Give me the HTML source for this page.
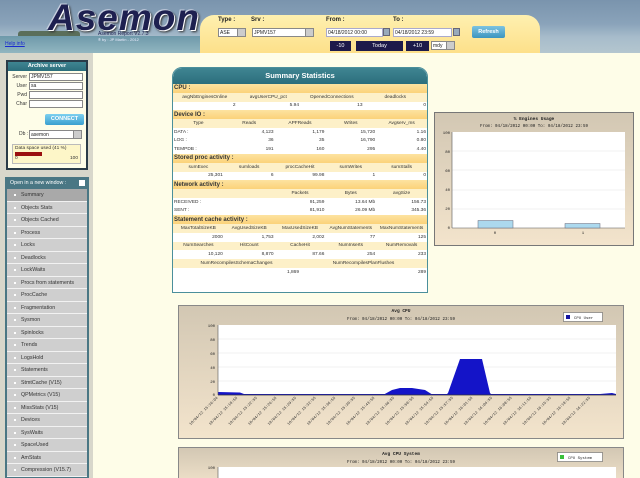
<!DOCTYPE html>
<html><head><meta charset="utf-8"><style>
*{margin:0;padding:0;box-sizing:border-box}
body{width:640px;height:478px;overflow:hidden;background:#fefde8;font-family:"Liberation Sans",sans-serif;position:relative}
.abs{position:absolute}
#hdr{left:0;top:0;width:640px;height:53px;background:linear-gradient(#7a94ad 0%,#8aa3ba 45%,#a7bccb 70%,#b4c6cf 100%)}
#logo{left:48px;top:-3px;font:italic bold 37px "Liberation Sans",sans-serif;color:#1e2050;letter-spacing:1px;text-shadow:1px 1px 0 #fff,-1px -1px 0 #c8d0e0,2px 2px 2px #333}
#island{left:18px;top:31px;width:62px;height:5px;background:#5a6e5a;border-radius:3px 3px 0 0}
#sea{left:0;top:36px;width:200px;height:17px;background:linear-gradient(#6e99aa,#92b6c0)}
#yel{left:200px;top:15px;width:340px;height:38px;background:linear-gradient(#fef0b0,#fde08a);border-radius:14px 14px 0 0}
.lbl{font-size:6px;font-weight:bold;color:#222}
.inp{background:#fff;border:1px solid #888;font-size:5px;padding-left:1px;line-height:8px;color:#222}
.sel:after{content:"";position:absolute;right:0;top:0;width:7px;height:100%;background:#ccc;border-left:1px solid #888}
.nb{background:#1d1a4a;color:#fff;font-size:5.5px;text-align:center;line-height:10px}
#side{left:0;top:53px;width:93px;height:425px;background:#d8d7cb}
#arch{left:6px;top:60px;width:82px;height:110px;background:#fefde8;border:2px solid #2a3b48}
.th{background:linear-gradient(#3f8592,#2c6e7c);color:#fff;font-size:5.5px;font-weight:bold;text-align:center}
#menu{left:5px;top:177px;width:84px;height:301px;background:#4a7784}
.mi{height:12.5px;background:#cfcfcf;border-bottom:1px solid #f2f2f2;font-size:5.3px;line-height:12px;padding-left:14px;color:#333;position:relative}
.mi:before{content:"";position:absolute;left:7px;top:5px;width:2px;height:2px;background:#fff}
#sum{left:172px;top:67px;width:256px;height:226px;background:#fff;border:1px solid #4b8f9b;border-radius:10px 10px 0 0;overflow:hidden}
#sum .th{height:16px;line-height:16px;font-size:7.5px;border-radius:9px 9px 0 0}
table{border-collapse:collapse;width:100%;table-layout:fixed}
td{font-size:4.8px;height:8.75px;padding:0 1px;color:#333;white-space:nowrap;overflow:hidden}
tr.s td{background:linear-gradient(#fde3a0,#fbd27a);font-weight:bold;font-size:6px;color:#333}
tr.h td{background:#fdf0c8;text-align:center}
tr.v td{background:#fff;text-align:right}
tr.v td.l{text-align:left}
</style></head><body>
<div id="hdr" class="abs"></div>
<div id="sea" class="abs"></div>
<div id="island" class="abs"></div>
<div id="logo" class="abs">Asemon</div>
<div class="abs" style="left:98px;top:31px;font-size:5px;color:#1e2050">Asemon Report V2.7.3</div>
<div class="abs" style="left:98px;top:37px;font-size:4px;color:#eef">® by : JP Martin - 2012</div>
<div class="abs" style="left:5px;top:41px;font-size:5px;color:#1a2ad0;text-decoration:underline">Help info</div>
<div id="yel" class="abs"></div>
<div class="abs lbl" style="left:218px;top:17px">Type :</div>
<div class="abs lbl" style="left:251px;top:17px">Srv :</div>
<div class="abs lbl" style="left:326px;top:17px">From :</div>
<div class="abs lbl" style="left:393px;top:17px">To :</div>
<div class="abs inp sel" style="left:218px;top:28px;width:28px;height:9px">ASE</div>
<div class="abs inp sel" style="left:252px;top:28px;width:62px;height:9px">JPMV157</div>
<div class="abs inp" style="left:326px;top:28px;width:57px;height:9px;border-color:#aac">04/18/2012 00:00</div>
<div class="abs" style="left:383px;top:28px;width:7px;height:8px;background:#9ab;border:1px solid #667"></div>
<div class="abs inp" style="left:393px;top:28px;width:59px;height:9px;border-color:#aac">04/18/2012 23:59</div>
<div class="abs" style="left:453px;top:28px;width:7px;height:8px;background:#9ab;border:1px solid #667"></div>
<div class="abs" style="left:472px;top:26px;width:33px;height:12px;background:linear-gradient(#7cc3e0,#3c95bf);border-radius:2px;color:#fff;font-size:5.5px;font-weight:bold;text-align:center;line-height:12px">Refresh</div>
<div class="abs nb" style="left:330px;top:41px;width:21px;height:10px">-10</div>
<div class="abs nb" style="left:356px;top:41px;width:47px;height:10px">Today</div>
<div class="abs nb" style="left:406px;top:41px;width:23px;height:10px">+10</div>
<div class="abs inp sel" style="left:431px;top:41px;width:24px;height:9px">mdy</div>

<div id="side" class="abs"></div>
<div id="arch" class="abs">
<div class="th" style="height:9px;line-height:9px">Archive server</div>
</div>
<div class="abs" style="left:8px;top:73px;width:19px;font-size:5px;text-align:right;line-height:9px;color:#333">Server<br>User<br>Pwd<br>Char</div>
<div class="abs inp" style="left:29px;top:73px;width:54px;height:8px;line-height:7px">JPMV157</div>
<div class="abs inp" style="left:29px;top:82px;width:54px;height:8px;line-height:7px">sa</div>
<div class="abs inp" style="left:29px;top:91px;width:54px;height:8px"></div>
<div class="abs inp" style="left:29px;top:100px;width:54px;height:8px"></div>
<div class="abs" style="left:45px;top:114px;width:39px;height:11px;background:linear-gradient(#7dd0ef,#3a9fcf);color:#fff;font-size:5.5px;font-weight:bold;text-align:center;line-height:11px;border-radius:2px">CONNECT</div>
<div class="abs" style="left:19px;top:131px;font-size:5px;color:#333">Db :</div>
<div class="abs inp sel" style="left:29px;top:130px;width:53px;height:9px">asemon</div>
<div class="abs" style="left:12px;top:144px;width:69px;height:20px;background:#fdf6c8;border:1px solid #bbb;font-size:4.8px;color:#333;padding:1px 2px">Data space used (41 %)
<div style="width:27px;height:4px;background:#9a0f0f;margin-top:1px"></div>
<div style="display:flex;justify-content:space-between"><span>0</span><span>100</span></div></div>

<div id="menu" class="abs">
<div style="height:12px;color:#fff;font-size:5.3px;line-height:12px;padding-left:5px;position:relative">Open in a new window :<span style="position:absolute;right:4px;top:3px;width:6px;height:6px;background:#fff"></span></div>
<div style="margin:0 2px">
<div class="mi" style="background:#a9a9a9">Summary</div>
<div class="mi">Objects Stats</div><div class="mi">Objects Cached</div><div class="mi">Process</div><div class="mi">Locks</div><div class="mi">Deadlocks</div><div class="mi">LockWaits</div><div class="mi">Procs from statements</div><div class="mi">ProcCache</div><div class="mi">Fragmentation</div><div class="mi">Sysmon</div><div class="mi">Spinlocks</div><div class="mi">Trends</div><div class="mi">LogsHold</div><div class="mi">Statements</div><div class="mi">StmtCache (V15)</div><div class="mi">QPMetrics (V15)</div><div class="mi">MissStats (V15)</div><div class="mi">Devices</div><div class="mi">SysWaits</div><div class="mi">SpaceUsed</div><div class="mi">AmStats</div><div class="mi">Compression (V15.7)</div>
</div></div>

<div id="sum" class="abs">
<div class="th">Summary Statistics</div>
<table>
<tr class="s"><td colspan="4">CPU :</td></tr>
<tr class="h"><td>avgNbEnginesOnline</td><td>avgUserCPU_pct</td><td>OpenedConnections</td><td>deadlocks</td></tr>
<tr class="v"><td>2</td><td>5.94</td><td>13</td><td>0</td></tr>
<tr class="s"><td colspan="4">Device IO :</td></tr>
</table>
<table>
<tr class="h"><td>Type</td><td>Reads</td><td>APFReads</td><td>Writes</td><td>Avgserv_ms</td></tr>
<tr class="v"><td class="l">DATA :</td><td>4,123</td><td>1,179</td><td>15,720</td><td>1.16</td></tr>
<tr class="v"><td class="l">LOG :</td><td>36</td><td>35</td><td>16,790</td><td>0.80</td></tr>
<tr class="v"><td class="l">TEMPDB :</td><td>191</td><td>160</td><td>295</td><td>4.40</td></tr>
<tr class="s"><td colspan="5">Stored proc activity :</td></tr>
<tr class="h"><td>sumExec</td><td>sumloads</td><td>procCacheHit</td><td>sumWrites</td><td>sumStalls</td></tr>
<tr class="v"><td>25,301</td><td>6</td><td>99.98</td><td>1</td><td>0</td></tr>
<tr class="s"><td colspan="5">Network activity :</td></tr>
</table>
<table>
<tr class="h"><td style="width:40%"></td><td>Packets</td><td>Bytes</td><td>avgSize</td></tr>
<tr class="v"><td class="l">RECEIVED :</td><td>91,259</td><td>13.64 Mb</td><td>156.73</td></tr>
<tr class="v"><td class="l">SENT :</td><td>81,910</td><td>26.09 Mb</td><td>345.36</td></tr>
<tr class="s"><td colspan="4">Statement cache activity :</td></tr>
</table>
<table>
<tr class="h"><td>MaxTotalSizeKB</td><td>AvgUsedSizeKB</td><td>MaxUsedSizeKB</td><td>AvgNumStatements</td><td>MaxNumStatements</td></tr>
<tr class="v"><td>2000</td><td>1,753</td><td>2,002</td><td>77</td><td>125</td></tr>
<tr class="h"><td>NumSearches</td><td>HitCount</td><td>CacheHit</td><td>NumInserts</td><td>NumRemovals</td></tr>
<tr class="v"><td>10,120</td><td>8,870</td><td>87.66</td><td>254</td><td>233</td></tr>
</table>
<table>
<tr class="h"><td>NumRecompilesSchemaChanges</td><td>NumRecompilesPlanFlushes</td></tr>
<tr class="v"><td>1,869</td><td>289</td></tr>
</table>
</div>

<svg class="abs" style="left:0;top:0" width="640" height="478" font-family="Liberation Mono,monospace">
<defs><linearGradient id="tan" x1="0" y1="0" x2="0" y2="1"><stop offset="0" stop-color="#d2c7b3"/><stop offset="1" stop-color="#f3e4cc"/></linearGradient></defs>
<rect x="434.5" y="112.5" width="199" height="133" fill="url(#tan)" stroke="#777"/>
<text x="534" y="120" font-size="4.5" font-weight="bold" text-anchor="middle" fill="#222">% Engines Usage</text>
<text x="534" y="127" font-size="4.2" text-anchor="middle" fill="#222">From: 04/18/2012 00:00 To: 04/18/2012 23:59</text>
<rect x="452" y="132" width="173" height="96" fill="#fff"/>
<g stroke="#e4e4e4" stroke-width=".5"><line x1="452" y1="151" x2="625" y2="151"/><line x1="452" y1="170" x2="625" y2="170"/><line x1="452" y1="190" x2="625" y2="190"/><line x1="452" y1="209" x2="625" y2="209"/></g>
<line x1="452" y1="132" x2="452" y2="228" stroke="#555" stroke-width=".6"/><line x1="452" y1="228" x2="625" y2="228" stroke="#555" stroke-width=".6"/>
<g font-size="4" fill="#222" text-anchor="end"><text x="450" y="134">100</text><text x="450" y="153">80</text><text x="450" y="172">60</text><text x="450" y="191">40</text><text x="450" y="210">20</text><text x="450" y="229">0</text></g>
<rect x="478" y="220.5" width="35" height="7.5" fill="#acd9ee" stroke="#667" stroke-width=".5"/>
<rect x="565" y="223.5" width="35" height="4.5" fill="#acd9ee" stroke="#667" stroke-width=".5"/>
<text x="495" y="234" font-size="4" fill="#222" text-anchor="middle">0</text><text x="583" y="234" font-size="4" fill="#222" text-anchor="middle">1</text>
<rect x="178.5" y="305.5" width="445" height="133" fill="url(#tan)" stroke="#888"/>
<text x="401" y="312" font-size="4.5" font-weight="bold" text-anchor="middle" fill="#222">Avg CPU</text>
<text x="401" y="320" font-size="4.2" text-anchor="middle" fill="#222">From: 04/18/2012 00:00 To: 04/18/2012 23:59</text>
<rect x="563.5" y="312.5" width="39" height="9" fill="#fff" stroke="#666" stroke-width=".6"/>
<rect x="566" y="315" width="4" height="4" fill="#1414a0"/><text x="574" y="319" font-size="4" fill="#222">CPU User</text>
<rect x="218" y="325" width="398" height="70" fill="#fff"/>
<g stroke="#e4e4e4" stroke-width=".5"><line x1="218" y1="339" x2="616" y2="339"/><line x1="218" y1="353" x2="616" y2="353"/><line x1="218" y1="367" x2="616" y2="367"/><line x1="218" y1="381" x2="616" y2="381"/></g>
<g font-size="4" fill="#222" text-anchor="end"><text x="215" y="327">100</text><text x="215" y="341">80</text><text x="215" y="355">60</text><text x="215" y="369">40</text><text x="215" y="383">20</text><text x="215" y="396">0</text></g>
<polygon fill="#1414c8" points="218,395 218,392 240,392.5 244,394 600,394 612,393 616,394 616,395"/>
<polygon fill="#1414c8" points="383,395 392,390 400,388 412,388 425,390 433,395"/>
<polygon fill="#1414c8" points="446,395 448,393 460,359 482,359 490,393 492,395"/>
<line x1="218" y1="325" x2="218" y2="395" stroke="#555" stroke-width=".6"/><line x1="218" y1="395" x2="616" y2="395" stroke="#333" stroke-width=".8"/>
<g font-size="3.8" fill="#333">
<text transform="translate(218,398) rotate(-45)" text-anchor="end">18/04/12 15:16:04</text>
<text transform="translate(237.6,398) rotate(-45)" text-anchor="end">18/04/12 15:18:55</text>
<text transform="translate(257.2,398) rotate(-45)" text-anchor="end">18/04/12 15:22:55</text>
<text transform="translate(276.8,398) rotate(-45)" text-anchor="end">18/04/12 15:26:55</text>
<text transform="translate(296.4,398) rotate(-45)" text-anchor="end">18/04/12 15:29:55</text>
<text transform="translate(316,398) rotate(-45)" text-anchor="end">18/04/12 15:32:55</text>
<text transform="translate(335.6,398) rotate(-45)" text-anchor="end">18/04/12 15:36:55</text>
<text transform="translate(355.2,398) rotate(-45)" text-anchor="end">18/04/12 15:39:55</text>
<text transform="translate(374.8,398) rotate(-45)" text-anchor="end">18/04/12 15:43:55</text>
<text transform="translate(394.4,398) rotate(-45)" text-anchor="end">18/04/12 15:46:55</text>
<text transform="translate(414,398) rotate(-45)" text-anchor="end">18/04/12 15:50:55</text>
<text transform="translate(433.6,398) rotate(-45)" text-anchor="end">18/04/12 15:54:55</text>
<text transform="translate(453.2,398) rotate(-45)" text-anchor="end">18/04/12 15:57:55</text>
<text transform="translate(472.8,398) rotate(-45)" text-anchor="end">18/04/12 16:01:55</text>
<text transform="translate(492.4,398) rotate(-45)" text-anchor="end">18/04/12 16:04:55</text>
<text transform="translate(512,398) rotate(-45)" text-anchor="end">18/04/12 16:08:55</text>
<text transform="translate(531.6,398) rotate(-45)" text-anchor="end">18/04/12 16:11:55</text>
<text transform="translate(551.2,398) rotate(-45)" text-anchor="end">18/04/12 16:15:55</text>
<text transform="translate(570.8,398) rotate(-45)" text-anchor="end">18/04/12 16:18:55</text>
<text transform="translate(590.4,398) rotate(-45)" text-anchor="end">18/04/12 16:22:55</text>
</g>
<rect x="178.5" y="447.5" width="445" height="40" fill="url(#tan)" stroke="#888"/>
<text x="401" y="455" font-size="4.5" font-weight="bold" text-anchor="middle" fill="#222">Avg CPU System</text>
<text x="401" y="463" font-size="4.2" text-anchor="middle" fill="#222">From: 04/18/2012 00:00 To: 04/18/2012 23:59</text>
<rect x="557.5" y="452.5" width="45" height="9" fill="#fff" stroke="#666" stroke-width=".6"/>
<rect x="560" y="455" width="4" height="4" fill="#3ac03a"/><text x="568" y="459" font-size="4" fill="#222">CPU System</text>
<rect x="218" y="467" width="398" height="15" fill="#fff"/>
<line x1="218" y1="467" x2="218" y2="478" stroke="#555" stroke-width=".6"/>
<text x="215" y="469" font-size="4" fill="#222" text-anchor="end">100</text>
</svg>
</body></html>
